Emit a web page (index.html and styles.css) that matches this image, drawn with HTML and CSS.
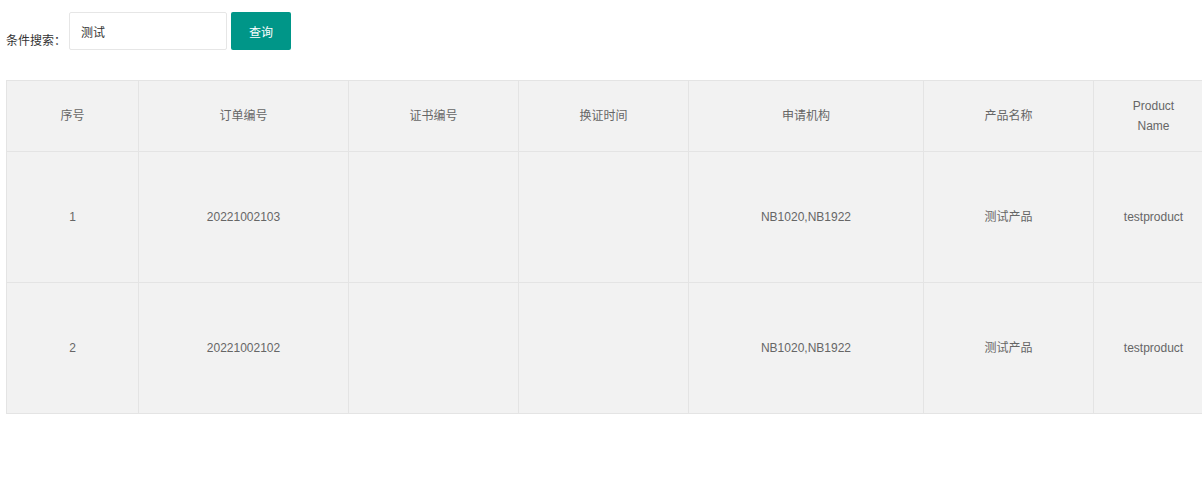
FILE: index.html
```html
<!DOCTYPE html>
<html lang="zh-CN">

<head>
    <meta charset="UTF-8">
    <meta name="viewport" content="width=device-width, initial-scale=1.0">
    <title>订单查询</title>
    <link rel="stylesheet" href="styles.css">
</head>

<body>
    <div class="page">
        <form class="search-bar" onsubmit="return false;">
            <label for="keyword" class="search-label">条件搜索：</label>
            <input type="text" id="keyword" class="search-input" value="测试">
            <button type="submit" class="search-btn">查询</button>
        </form>

        <div class="table-wrap">
            <table class="data-table">
                <colgroup>
                    <col class="col-no">
                    <col class="col-order">
                    <col class="col-cert">
                    <col class="col-time">
                    <col class="col-org">
                    <col class="col-name">
                    <col class="col-en">
                </colgroup>
                <thead>
                    <tr>
                        <th>序号</th>
                        <th>订单编号</th>
                        <th>证书编号</th>
                        <th>换证时间</th>
                        <th>申请机构</th>
                        <th>产品名称</th>
                        <th>Product Name</th>
                    </tr>
                </thead>
                <tbody>
                    <tr>
                        <td>1</td>
                        <td>20221002103</td>
                        <td></td>
                        <td></td>
                        <td>NB1020,NB1922</td>
                        <td>测试产品</td>
                        <td>testproduct</td>
                    </tr>
                    <tr>
                        <td>2</td>
                        <td>20221002102</td>
                        <td></td>
                        <td></td>
                        <td>NB1020,NB1922</td>
                        <td>测试产品</td>
                        <td>testproduct</td>
                    </tr>
                </tbody>
            </table>
        </div>
    </div>
</body>

</html>
```

FILE: styles.css
```css
body {
    margin: 0;
    font-family: "Liberation Sans", Arial, "Noto Sans CJK SC", sans-serif;
    font-size: 12px;
    color: #333;
    background: #fff;
}

.page {
    padding: 12px 0 0 6px;
}

.search-bar {
    display: flex;
    align-items: flex-start;
    height: 38px;
}

.search-label {
    padding-top: 21px;
    margin-right: 3px;
    color: #333;
    line-height: 16px;
}

.search-input {
    box-sizing: border-box;
    width: 158px;
    height: 38px;
    padding: 0 10px 0 11px;
    border: 1px solid #e6e6e6;
    border-radius: 2px;
    font-family: inherit;
    font-size: 12px;
    color: #333;
    outline: none;
}

.search-btn {
    box-sizing: border-box;
    width: 60px;
    height: 38px;
    margin-left: 4px;
    border: none;
    border-radius: 2px;
    background-color: #009688;
    color: #fff;
    font-family: inherit;
    font-size: 12px;
    cursor: pointer;
}

/* table is wider than the window, the rest is cut off */
.table-wrap {
    margin-top: 30px;
    overflow: hidden;
}

.data-table {
    border-collapse: collapse;
    table-layout: fixed;
    width: 1207px;
    background-color: #f2f2f2;
    color: #666;
}

.col-no { width: 132px; }
.col-order { width: 210px; }
.col-cert { width: 170px; }
.col-time { width: 170px; }
.col-org { width: 235px; }
.col-name { width: 170px; }
.col-en { width: 120px; }

.data-table th,
.data-table td {
    border: 1px solid #e4e4e4;
    padding: 0 25px;
    text-align: center;
    vertical-align: middle;
    font-weight: normal;
    line-height: 20px;
}

.data-table thead tr {
    height: 71px;
}

.data-table tbody tr {
    height: 131px;
}
```
